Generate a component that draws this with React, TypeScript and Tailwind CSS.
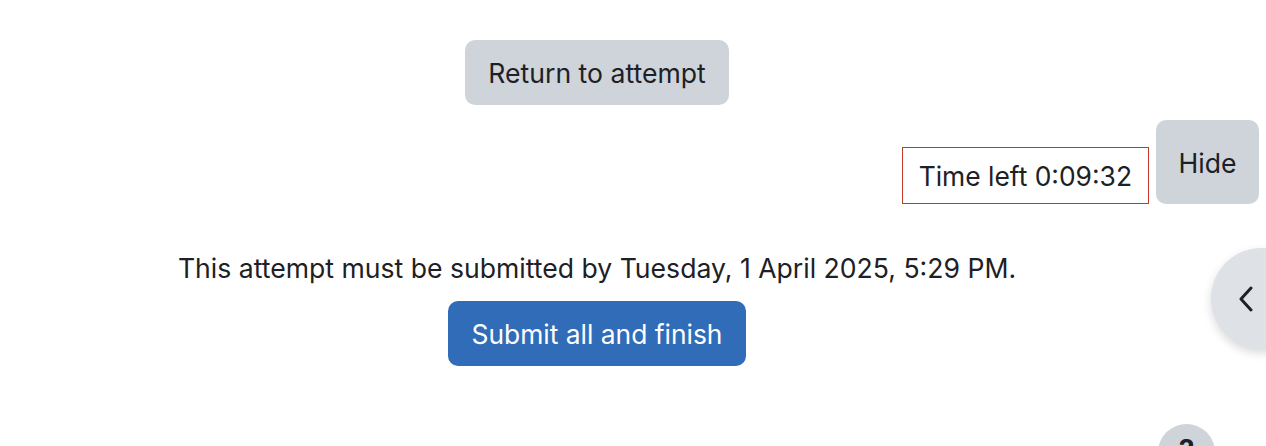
import React from "react";

export default function App() {
  return (
    <div
      className="relative w-[1266px] h-[446px] overflow-hidden bg-white text-[#1d2125]"
      style={{ fontFamily: "Inter, 'Noto Sans', sans-serif" }}
    >
      <div className="flex flex-col">
        <div className="w-[1194px] flex justify-center pt-[40px]">
          <button className="h-[65px] px-[23px] pt-[2px] rounded-[10px] bg-[#ced4da] text-[26.6px] text-[#1d2125] leading-none">
            Return to attempt
          </button>
        </div>
        <div className="flex justify-end items-end gap-[7px] pr-[7px] mt-[15px]">
          <div className="h-[57px] px-[16px] pt-[2px] border border-[#c0392b] flex items-center text-[26.4px] leading-none">
            Time left 0:09:32
          </div>
          <button className="w-[103px] h-[84px] pt-[2px] rounded-[10px] bg-[#ced4da] text-[26.6px] leading-none">
            Hide
          </button>
        </div>
        <div className="w-[1194px] flex flex-col items-center mt-[47px]">
          <p className="text-[26.6px] leading-[32px] pt-[1px]">
            This attempt must be submitted by Tuesday, 1 April 2025, 5:29 PM.
          </p>
          <button className="mt-[17px] h-[65px] px-[24px] pt-[2px] rounded-[10px] bg-[#316cb8] text-white text-[26.4px] leading-none">
            Submit all and finish
          </button>
        </div>
      </div>
      <div className="absolute left-[1211px] top-[248px] w-[110px] h-[101px] rounded-full bg-[#dee2e6] shadow-[0_4px_10px_rgba(0,0,0,0.15)] flex items-center pl-[27px]">
        <svg width="16" height="26" viewBox="0 0 16 26" fill="none">
          <path d="M13 2 L3 13 L13 24" stroke="#1d2125" strokeWidth="3" strokeLinecap="round" strokeLinejoin="round" />
        </svg>
      </div>
      <div className="absolute left-[1158px] top-[424px] w-[57px] h-[57px] rounded-full bg-[#ced4da] flex justify-center pt-[12px] text-[28px] font-bold leading-none">
        ?
      </div>
    </div>
  );
}
